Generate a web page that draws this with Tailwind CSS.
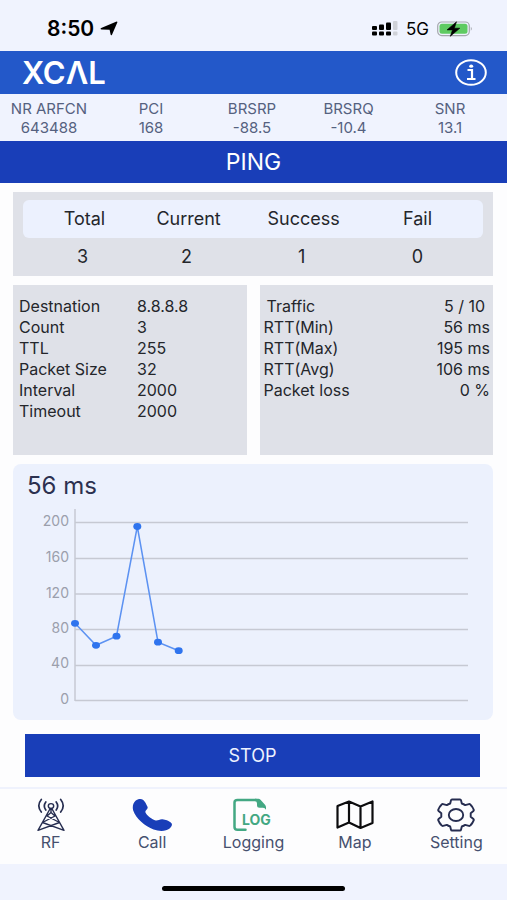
<!DOCTYPE html>
<html lang="en">
<head>
<meta charset="utf-8">
<meta name="viewport" content="width=device-width, initial-scale=1">
<title>XCAL - PING</title>
<script src="https://cdn.jsdelivr.net/npm/@tailwindcss/browser@4"></script>
</head>
<body class="min-h-screen flex flex-col bg-[#fdfdfe] font-[Inter,'Liberation_Sans',sans-serif] text-[#24262b]">

<!-- Status bar -->
<div class="h-[51px] bg-[#f0f3fe] flex items-center justify-between pl-[47px] pr-[34px] pt-1.5 text-black">
  <div class="flex items-center gap-1.5">
    <span class="text-[21px] leading-6 font-semibold">8:50</span>
    <svg class="w-[18px] h-4" viewBox="0 0 18 16" aria-hidden="true"><path d="M17.400 1.200 12 13.700q-.9 1.300-1.400-.2L9.600 8.800 1.600 8.500Q-.4 7.800 1.200 6.900L16 .8Q17.600.2 17.400 1.200Z"/></svg>
  </div>
  <div class="flex items-center gap-2">
    <svg class="w-[26px] h-[15px]" viewBox="0 0 26 15" aria-hidden="true">
      <g><rect x="0" y="5" width="5" height="4" rx="1"/><rect x="7" y="3.500" width="5" height="5.500" rx="1"/><rect x="14" y="1.500" width="5" height="7.500" rx="1"/><rect x="0" y="10.500" width="5" height="4" rx="1"/><rect x="7" y="10.500" width="5" height="4" rx="1"/><rect x="14" y="10.500" width="5" height="4" rx="1"/></g>
      <g fill="#cfd1d8"><rect x="21" y="0" width="4.500" height="9" rx="1"/><rect x="21" y="10.500" width="4.500" height="4" rx="1"/></g>
    </svg>
    <span class="text-[17px] leading-6">5G</span>
    <svg class="w-[36px] h-4" viewBox="0 0 36 16" aria-hidden="true">
      <rect x=".7" y="1" width="31.600" height="13.600" rx="4" fill="#f0f3fe" stroke="#a5a7ad" stroke-width="1.200"/>
      <rect x="2.500" y="2.800" width="28" height="10" rx="2.500" fill="#5fcb62"/>
      <path d="M33.800 5.800q2 2 0 4z" fill="#a5a7ad"/>
      <path d="M19.500 .8 10 8.900h5.500l-2.200 6.400 9.500-8.100h-5.500z" stroke="#000" stroke-width=".6"/>
    </svg>
  </div>
</div>

<!-- App header -->
<header class="h-[43px] bg-[#2358c9] text-white flex items-center justify-between pl-[22px] pr-5">
  <span class="text-[31px] leading-9 font-semibold" aria-label="XCAL">XCΛL</span>
  <button type="button" aria-label="Information">
    <svg class="w-8 h-[27px] block" viewBox="0 0 32 27" fill="none" stroke="currentColor" aria-hidden="true">
      <ellipse cx="16" cy="13.500" rx="14.800" ry="12.300" stroke-width="2"/>
      <path d="M12.500 11H17v8.500M12 20h8.500" stroke-width="2.200"/>
      <ellipse cx="16.200" cy="7.200" rx="2" ry="1.600" fill="currentColor" stroke="none"/>
    </svg>
  </button>
</header>

<!-- Radio metrics -->
<dl class="h-[47px] bg-[#f0f3fe] text-[#55617f] text-[15px] leading-[19px] text-center grid grid-cols-[98fr_106fr_96fr_97fr_110fr] content-center pt-px">
  <div><dt>NR ARFCN</dt><dd>643488</dd></div>
  <div><dt>PCI</dt><dd>168</dd></div>
  <div><dt>BRSRP</dt><dd>-88.5</dd></div>
  <div><dt>BRSRQ</dt><dd>-10.4</dd></div>
  <div class="pr-1"><dt>SNR</dt><dd>13.1</dd></div>
</dl>

<h1 class="h-[42px] bg-[#193eb8] text-white text-[23px] leading-[42px] text-center">PING</h1>

<main class="flex-1 flex flex-col pl-[13px] pr-[14px] pt-[9px] pb-[10px]">
  <!-- Totals -->
  <section class="bg-[#dfe1e8] pt-2 px-[10px]">
    <table class="w-full table-fixed text-center text-[18px] leading-6">
      <colgroup><col class="w-[25%]"><col class="w-[22%]"><col class="w-[28%]"><col class="w-[25%]"></colgroup>
      <thead>
        <tr class="h-[38px]">
          <th scope="col" class="font-normal bg-[#ecf1fe] rounded-l-md pl-2">Total</th>
          <th scope="col" class="font-normal bg-[#ecf1fe]">Current</th>
          <th scope="col" class="font-normal bg-[#ecf1fe]">Success</th>
          <th scope="col" class="font-normal bg-[#ecf1fe] rounded-r-md pr-4">Fail</th>
        </tr>
      </thead>
      <tbody>
        <tr class="h-[38px]"><td class="pl-1">3</td><td class="pr-1">2</td><td class="pr-1">1</td><td class="pr-4">0</td></tr>
      </tbody>
    </table>
  </section>

  <!-- Settings and results -->
  <div class="grid grid-cols-2 gap-[13px] mt-[9px] text-[16px] leading-[21px]">
    <dl class="bg-[#dfe1e8] min-h-[170px] pt-[11px] pl-1.5 grid grid-cols-[118px_1fr] content-start">
      <dt>Destnation</dt><dd>8.8.8.8</dd>
      <dt>Count</dt><dd>3</dd>
      <dt>TTL</dt><dd>255</dd>
      <dt>Packet Size</dt><dd>32</dd>
      <dt>Interval</dt><dd>2000</dd>
      <dt>Timeout</dt><dd>2000</dd>
    </dl>
    <dl class="bg-[#dfe1e8] min-h-[170px] pt-[11px] pl-1 pr-[3px]">
      <div class="flex justify-between pl-[3px] pr-[5px]"><dt>Traffic</dt><dd>5 / 10</dd></div>
      <div class="flex justify-between"><dt>RTT(Min)</dt><dd>56 ms</dd></div>
      <div class="flex justify-between"><dt>RTT(Max)</dt><dd>195 ms</dd></div>
      <div class="flex justify-between"><dt>RTT(Avg)</dt><dd>106 ms</dd></div>
      <div class="flex justify-between"><dt>Packet loss</dt><dd>0 %</dd></div>
    </dl>
  </div>

  <!-- Round-trip time chart -->
  <section class="bg-[#ecf1fd] rounded-lg mt-[9px] pt-2 pb-1">
    <h2 class="pl-[14px] text-[24px] leading-7 text-[#2c3150]">56 ms</h2>
    <svg class="w-full block" viewBox="0 0 480 216" role="img" aria-label="Ping round-trip time">
      <g stroke="#c6c9d3" stroke-width="1.500">
        <path d="M62 22.500H455M62 58.500H455M62 94H455M62 129.500H455M62 165.500H455M62 200.500H455M62 9V201" fill="none"/>
      </g>
      <g fill="#9b9fac" font-size="14" text-anchor="end">
        <text x="56" y="26">200</text>
        <text x="56" y="62">160</text>
        <text x="56" y="98">120</text>
        <text x="56" y="133">80</text>
        <text x="56" y="168">40</text>
        <text x="56" y="204">0</text>
      </g>
      <path d="M62 123.300 83 145.300 103.500 136.200 124.300 26.500 145 142.200 165.700 150.700" fill="none" stroke="#5c92f2" stroke-width="1.500"/>
      <g fill="#2f74ee">
        <ellipse cx="62" cy="123.300" rx="4" ry="3.400"/>
        <ellipse cx="83" cy="145.300" rx="4" ry="3.400"/>
        <ellipse cx="103.500" cy="136.200" rx="4" ry="3.400"/>
        <ellipse cx="124.300" cy="26.500" rx="4" ry="3.400"/>
        <ellipse cx="145" cy="142.200" rx="4" ry="3.400"/>
        <ellipse cx="165.700" cy="150.700" rx="4" ry="3.400"/>
      </g>
    </svg>
  </section>

  <button type="button" class="h-[43px] ml-3 mr-[13px] mt-[14px] bg-[#193eb8] text-[#eef2ff] text-[18px] leading-6">STOP</button>
</main>

<!-- Tab bar -->
<nav class="h-[77px] border-t-2 border-[#eff2fd] bg-[#fdfdfe] grid grid-cols-5 text-[16px] leading-5 text-[#46506f] text-center">
  <a href="#rf" class="flex flex-col items-center pt-[9px]">
    <svg class="w-7 h-[34px]" viewBox="0 0 28 34" fill="none" stroke="#262d50" stroke-width="1.400" stroke-linecap="round" stroke-linejoin="round" aria-hidden="true">
      <ellipse cx="14" cy="8" rx="2.700" ry="2.400"/>
      <path d="M8.800 4q-3 4 0 8M19.200 4q3 4 0 8M4.300 1.500q-5 6.200 0 12.500M23.700 1.500q5 6.200 0 12.500" stroke-width="1.700"/>
      <path d="M13.200 10.500 1 32.300M14.800 10.500 27 32.300M14 11v3.500L18 18 5.500 24.500 27 32.300M14 14.500 10 18 22.500 24.500 1 32.300"/>
    </svg>
    <span>RF</span>
  </a>
  <a href="#call" class="flex flex-col items-center pt-[9px]">
    <svg class="w-10 h-[34px]" viewBox="0 0 40 34" fill="#193eb8" aria-hidden="true">
      <path d="M3.500 2.800C6 .6 9.300.3 11.300 2c1.900 1.800 3 4.300 4.200 6.700 1.100 2.300-2.700 3.500-2.100 5.500 1.100 3.300 6.800 7.300 10.300 8.200 2.300.5 3.800-1.500 6.800-1.200 3.200.3 5.800 1.500 8.300 3.200 2.200 1.700 1 4.400-1.200 6.200-3.600 2.800-10.200 3-16 .9C13 28.200 4 20.500 1.200 12.500.3 9 .8 5.400 3.500 2.800Z"/>
    </svg>
    <span>Call</span>
  </a>
  <a href="#logging" class="flex flex-col items-center pt-[9px]">
    <svg class="w-10 h-[34px]" viewBox="0 0 40 34" aria-hidden="true">
      <path d="M12.500 31.800H4.500q-3 0-3-2.800V4.500Q1.500 2 4.500 2H23" fill="none" stroke="#43a883" stroke-width="2.500" stroke-linecap="round"/>
      <path d="M22 .8h3.500q1 0 2 1l4.500 5q1 1 1 2.500v2.500q-1-2-3-2h-3.500q-2.500 0-2.500-2.500V5.500Q24 3 22 3Z" fill="#43a883"/>
      <text x="9" y="26.500" font-size="14" font-weight="700" fill="#43a883">LOG</text>
    </svg>
    <span>Logging</span>
  </a>
  <a href="#map" class="flex flex-col items-center pt-[9px]">
    <svg class="w-10 h-[34px]" viewBox="0 0 40 34" fill="none" stroke="#0c0c0e" stroke-width="2.200" stroke-linejoin="round" aria-hidden="true">
      <path d="M2.500 8 14 3.500 25.500 8.500 37.500 3.500V25L25.500 30 14 24.500 2.500 29.500ZM14 3.500v21M25.500 8.500V30"/>
    </svg>
    <span>Map</span>
  </a>
  <a href="#setting" class="flex flex-col items-center pt-[9px]">
    <svg class="w-10 h-[34px]" viewBox="0 0 40 34" fill="none" stroke="#262d50" stroke-width="1.900" stroke-linejoin="round" aria-hidden="true">
      <path d="M16 1.500h8q.8 0 1 .8l.8 3.200q1.900.6 3.400 1.600l3.700-1q.9-.2 1.400.4 2.400 2.300 3.500 5.300.2.700-.4 1.200L34.700 15.300v3.400L37.400 21q.6.500.4 1.200-1.100 3-3.500 5.300-.5.600-1.400.4l-3.700-1q-1.500 1-3.400 1.600L25 31.700q-.2.800-1 .8h-8q-.8 0-1-.8l-.8-3.200q-1.900-.6-3.400-1.600l-3.700 1q-.9.200-1.400-.4-2.400-2.300-3.500-5.300-.2-.7.400-1.200l2.700-2.300v-3.400L2.600 13q-.6-.5-.4-1.200 1.100-3 3.500-5.300.5-.6 1.400-.4l3.700 1q1.500-1 3.400-1.600L15 2.300q.2-.8 1-.8Z"/>
      <ellipse cx="20" cy="17" rx="7.200" ry="6"/>
    </svg>
    <span>Setting</span>
  </a>
</nav>

<!-- Home indicator -->
<div class="h-9 bg-[#f0f3fe] flex justify-center items-center pt-3">
  <div class="w-[36%] h-[5px] rounded-full bg-black"></div>
</div>
</body>
</html>
